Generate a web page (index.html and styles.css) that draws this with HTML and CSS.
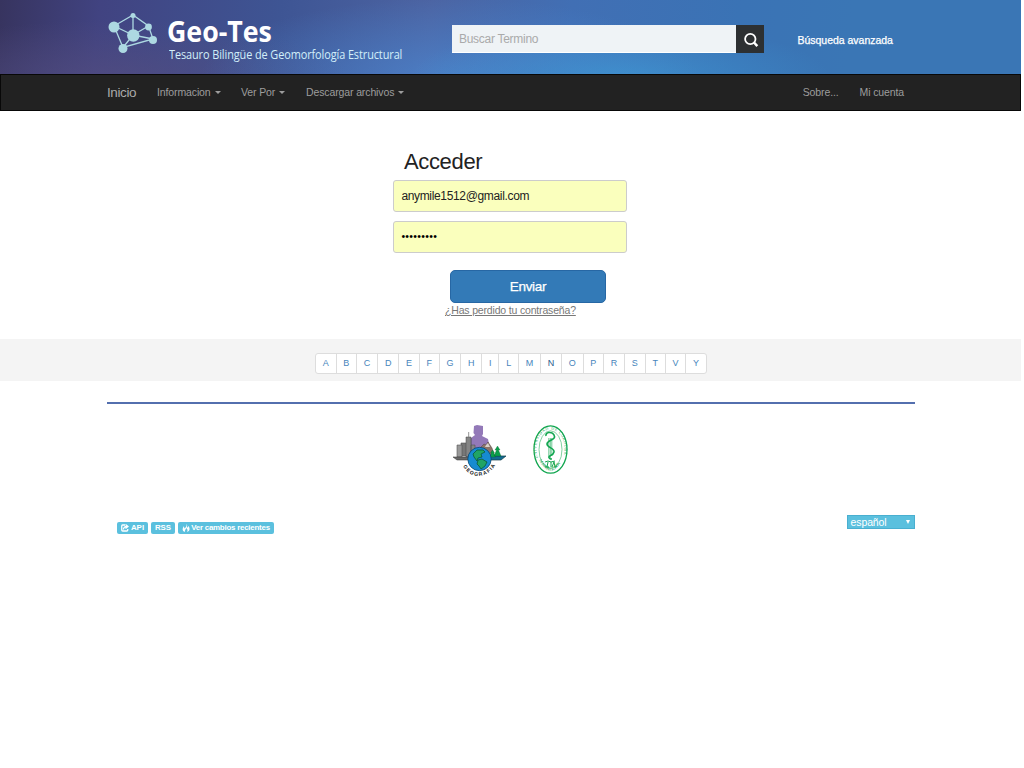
FILE: index.html
```html
<!DOCTYPE html>
<html lang="es">
<head>
<meta charset="utf-8">
<title>Geo-Tes</title>
<link rel="stylesheet" href="styles.css">
</head>
<body>
<div class="page">
  <header class="header">
    <div class="brand">
      <svg width="61" height="60" viewBox="0 0 61 60">
        <g stroke="#add9e2" stroke-width="1.300" fill="none"><path d="M8 21 27 10 42.500 21 47 34 17 42.500ZM27 10V30M8 21 27 30 42.500 21M17 42.500 27 30 47 34"/></g>
        <g fill="#add9e2"><circle cx="27" cy="10.500" r="2.500"/><circle cx="8" cy="22" r="5.500"/><circle cx="42.500" cy="22" r="3.400"/><circle cx="27.300" cy="30.500" r="6.200"/><circle cx="47" cy="35" r="4"/><circle cx="17" cy="43.500" r="4.500"/></g>
      </svg>
      <div class="brand-text">
        <span class="brand-name">Geo-Tes</span>
        <span class="brand-sub">Tesauro Bilingüe de Geomorfología Estructural</span>
      </div>
    </div>
    <div class="search">
      <input class="search-input" placeholder="Buscar Termino">
      <button class="search-button" aria-label="Buscar"><svg width="16" height="16" viewBox="0 0 16 16" fill="none" stroke="#fff"><circle cx="7.300" cy="7" r="5.200" stroke-width="1.800"/><path d="m11 10.500 3.300 3.700" stroke-width="2.500"/></svg></button>
    </div>
    <a class="advanced">Búsqueda avanzada</a>
  </header>
  <nav class="nav">
    <a class="home">Inicio</a>
    <a class="info">Informacion<i class="caret"></i></a>
    <a class="by">Ver Por<i class="caret"></i></a>
    <a class="download">Descargar archivos<i class="caret"></i></a>
    <a class="about">Sobre...</a>
    <a class="account">Mi cuenta</a>
  </nav>
  <main class="login">
    <h1>Acceder</h1>
    <div class="field">anymile1512@gmail.com</div>
    <div class="field password">•••••••••</div>
    <button class="submit">Enviar</button>
    <a class="forgot">¿Has perdido tu contraseña?</a>
  </main>
  <div class="alphabet">
    <div class="letters"><a>A</a><a>B</a><a>C</a><a>D</a><a>E</a><a>F</a><a>G</a><a>H</a><a>I</a><a>L</a><a>M</a><a class="dark">N</a><a>O</a><a>P</a><a>R</a><a>S</a><a>T</a><a>V</a><a>Y</a></div>
  </div>
  <footer class="footer">
    <div class="logos">
      <svg width="54" height="52" viewBox="0 0 54 52">
        <path d="M18 24V13l4-3-1.500-2 .5-7 3-1 6 1v8l-1 2 6 3 2 10Z" fill="#9379b8"/>
        <path d="M8 31V18h6V13h4v18Z" fill="#777" stroke="#555" stroke-width=".6"/>
        <path d="M4 32V20h5v12Z" fill="#999" stroke="#555" stroke-width=".6"/>
        <path d="M13 32V12h5v20ZM18 31V20h4v11Z" fill="#858585" stroke="#444" stroke-width=".5"/>
        <path d="M15.700 12V7" stroke="#777" stroke-width=".8"/>
        <path d="M0 32h18v3H4Z" fill="#686868" stroke="#333" stroke-width=".5"/>
        <path d="M28 26v-4l3-3 2 1 2-3 4 6 3 9H30Z" fill="#8b7468" stroke="#4e403a" stroke-width=".5"/>
        <path d="m32 22 1-2 2-2 2 4" fill="#d9d0ca"/>
        <path d="M36 31h17l-5 4H36Z" fill="#126c91" stroke="#143e48" stroke-width=".7"/>
        <path d="m39.500 25-2 3h1l-2 4h6l-2-4h1ZM44.500 21l-2.500 4h1.500l-2.500 6h7l-2.500-6H47Z" fill="#0aa04a" stroke="#05592b" stroke-width=".3"/>
        <circle cx="26.500" cy="34" r="11.700" fill="#168bd1" stroke="#073b64" stroke-width=".7"/>
        <path d="m20 29 4-4h6l2 2-4 2 1 3-4 1-1 3-3-4ZM25 35l4-1 5 3-2 4-4 3-2-3-2-2Z" fill="#20a465" stroke="#07512f" stroke-width=".7"/>
        <path id="ring" d="M10 41Q18 54 30 50 39 48 43 38" fill="none"/>
        <text class="ring-text"><textPath href="#ring" textLength="40">GEOGRAFIA</textPath></text>
      </svg>
      <svg width="36" height="50" viewBox="0 0 36 50">
        <ellipse cx="17.500" cy="24.500" rx="16.500" ry="23.700" fill="#fff" stroke="#12a650" stroke-width="1.300"/>
        <ellipse cx="17.500" cy="24.500" rx="11.500" ry="18.700" fill="none" stroke="#4cbd78" stroke-width=".7"/>
        <path id="seal-top" d="M5 33C0 17 8 4.500 17.500 4.500S35 17 30 33" fill="none"/>
        <path id="seal-bottom" d="M6 35Q17.500 56 29 35" fill="none"/>
        <text class="seal-text"><textPath href="#seal-top" textLength="68">UNIVERSIDAD DE CORDOBA</textPath></text>
        <text class="seal-text"><textPath href="#seal-bottom" textLength="29">MONTERIA COLOMBIA</textPath></text>
        <path d="M15.800 13v20M17.300 13v22M18.800 13v18" stroke="#49b979" stroke-width=".8"/>
        <path d="M13 11c-1-4 6-5 8-1 3 5-7 5-7 9s8 4 7 8-5 3-5 5 1 2 3 2" fill="none" stroke="#12a650" stroke-width="1.600"/>
        <path d="m12 37 3-1 3 1 4-1M15 37l-1 5M18 37v5M19 42l2-5 1 5 2-1M12 42h4" fill="none" stroke="#12a650" stroke-width="1"/>
      </svg>
    </div>
    <div class="tools">
      <a class="badge api"><svg width="8" height="8" viewBox="0 0 16 16" fill="none" stroke="#fff" stroke-width="2.600"><path d="M8 2H3Q1.500 2 1.500 4v8q0 2 2 2h8q2 0 2-2v-2M5 11q0-6 7-6M9 1l5 4-5 4"/></svg><span>API</span></a>
      <a class="badge rss"><span>RSS</span></a>
      <a class="badge recent"><svg width="8" height="8" viewBox="0 0 16 16"><path fill="#fff" d="M9 0c3 3 0 5 1 8l3-4c4 6 2 10-3 12 2-3 1-5-1-8-2 3-4 5-3 8C0 14 0 9 4 4c0 3 1 4 1 5 3-3 5-5 4-9Z"/></svg><span>Ver cambios recientes</span></a>
      <div class="language"><span>español</span><i></i></div>
    </div>
  </footer>
</div>
</body>
</html>
```
FILE: styles.css
```css
* { box-sizing: border-box; }
body { margin: 0; background: #fff; font-family: "Liberation Sans", Arial, sans-serif; }
.page { width: 1021px; height: 768px; overflow: hidden; }
.header { height: 74px; display: flex; align-items: flex-start; padding-left: 106px; background: radial-gradient(ellipse 210px 55px at 620px 78px, rgba(62,151,211,.75), transparent), radial-gradient(ellipse 250px 80px at 450px 78px, rgba(75,137,211,.7), transparent), radial-gradient(ellipse 240px 60px at 110px 80px, rgba(83,77,128,.75), transparent), linear-gradient(95deg, #37345f 0, #414381 100px, #3e5594 280px, #4c64a3 430px, #416fb4 570px, #3a73b5 740px, #3a76b5 850px); }
.brand { display: flex; width: 300px; height: 60px; margin-top: 5px; }
.brand svg { display: block; flex: none; }
.brand-text { display: flex; flex-direction: column; padding-top: 9px; width: 239px; white-space: nowrap; }
.brand-name { width: max-content; font: bold 28px/34px "Open Sans", sans-serif; color: #fff; transform: scaleX(.955); transform-origin: left; }
.brand-sub { width: max-content; margin-left: 1.500px; font: 12.5px/14px "Open Sans", sans-serif; letter-spacing: -.1px; color: #d2effa; transform: scaleX(.872); transform-origin: left; }
.search { display: flex; margin: 25px 0 0 46px; height: 28px; }
.search-input { width: 284px; height: 28px; padding: 0 7px; border: 0; border-bottom: 1px solid #fff; border-radius: 0; background: #eff3f6; font: 12px "Liberation Sans", sans-serif; letter-spacing: -.28px; }
.search-input::placeholder { color: #aaa; opacity: 1; }
.search-button { display: flex; align-items: center; justify-content: center; width: 28px; height: 28px; padding: 1px 0 0 1px; border: 0; background: #2d3032; }
.advanced { margin: 34px 0 0 33.500px; color: #fff; font-size: 10.5px; line-height: 13px; letter-spacing: -.02px; -webkit-text-stroke: .25px #fff; white-space: nowrap; }
.nav { height: 37px; border: 1px solid #080808; background: #222; display: flex; align-items: center; padding: 0 116px 1px 105px; font-size: 10.5px; letter-spacing: -.12px; color: #9d9d9d; white-space: nowrap; }
.home { font-size: 13.5px; width: 51px; color: #aaa; letter-spacing: -.4px; padding-left: 1px; }
.info { width: 84px; }
.by { width: 65px; }
.about { margin-left: auto; margin-right: 21px; }
.caret { display: inline-block; margin-left: 4px; border: 3px solid transparent; border-top-color: currentColor; border-bottom: 0; vertical-align: 2px; }
.login { height: 228px; margin-left: 393.400px; width: 234px; padding-top: 38px; display: flex; flex-direction: column; align-items: flex-start; }
.login h1 { margin: 0 0 6px 10.600px; font-size: 22px; line-height: 25px; font-weight: 400; color: #222; letter-spacing: -.35px; }
.field { width: 234px; height: 32px; flex: none; border: 1px solid #ccc; border-radius: 3px; background: #faffbd; padding: 0 7px; font-size: 12px; line-height: 30px; color: #222; letter-spacing: -.34px; }
.password { margin-top: 9px; color: #000; font-size: 10.5px; line-height: 28px; letter-spacing: .3px; }
.submit { width: 156px; height: 33px; flex: none; margin: 17px 0 0 56.600px; padding: 0; color: #fff; background: #337ab7; border: 1px solid #2767a4; border-radius: 5px; font: 13.5px "Liberation Sans", sans-serif; letter-spacing: -.3px; -webkit-text-stroke: .25px #fff; }
.forgot { margin: 1px 0 0 51.600px; color: #777; text-decoration: underline; font-size: 10.5px; line-height: 13px; letter-spacing: -.17px; white-space: nowrap; }
.alphabet { height: 42px; background: #f4f4f4; padding: 14px 0 0 315px; }
.letters { display: flex; width: max-content; height: 21px; border: 1px solid #ddd; border-radius: 3px; background: #fff; overflow: hidden; font-size: 9px; line-height: 19px; color: #4785bc; }
.letters a { padding: 0 6.780px; border-right: 1px solid #ddd; }
.letters a:last-child { border-right: 0; }
.letters .dark { color: #285b8c; }
.footer { width: 808px; margin: 21px 0 0 106.500px; border-top: 2px solid #536fae; }
.logos { display: flex; gap: 26px; margin: 21px 0 0 346.500px; height: 52px; }
.ring-text { font: bold 5px "Liberation Sans", sans-serif; fill: #111; }
.seal-text { font: 4px "Liberation Serif", serif; fill: #12a650; }
.tools { display: flex; margin: 38px 0 0 10.500px; height: 22px; align-items: flex-start; gap: 3px; }
.badge { height: 12px; margin-top: 7px; border-radius: 2px; background: #5bc0de; color: #fff; font-size: 7.900px; line-height: 12px; font-weight: bold; display: flex; align-items: center; justify-content: center; gap: 2px; white-space: nowrap; }
.api { width: 31px; }
.rss { width: 24px; }
.recent { width: 96px; gap: 1px; letter-spacing: -.22px; }
.language { width: 68px; height: 14px; margin-left: auto; border: 1px solid #49afd0; background: #5bc0de; color: #fff; font-size: 10.500px; line-height: 12px; letter-spacing: -.1px; display: flex; align-items: center; justify-content: space-between; padding: 0 4px 0 3px; }
.language i { border: 2.500px solid transparent; border-top: 4px solid #fff; border-bottom: 0; }
```
